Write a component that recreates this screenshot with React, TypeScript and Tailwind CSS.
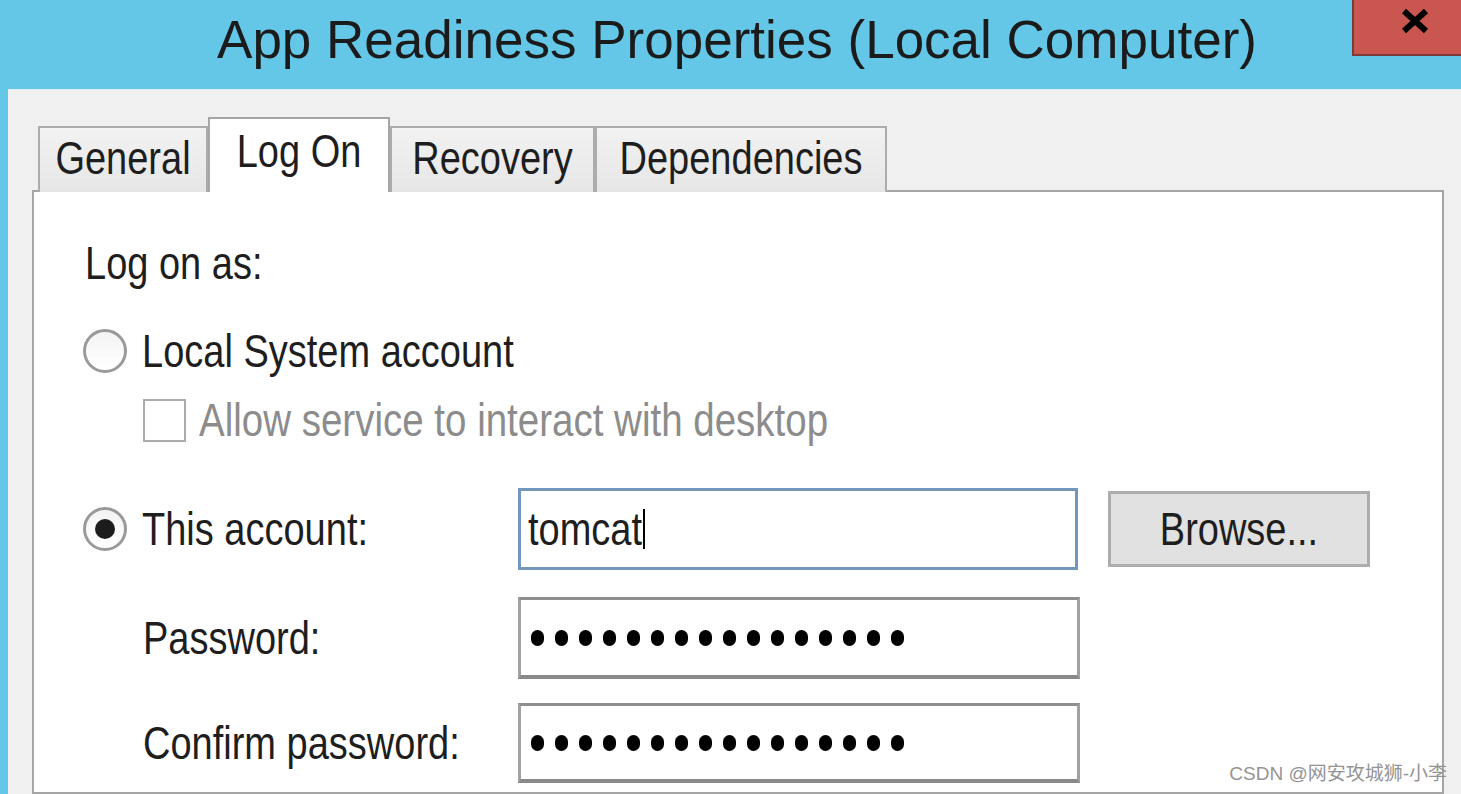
import React from "react"

function Txt({ children, className = "" }: { children: React.ReactNode; className?: string }) {
    return <span className={"inline-block scale-y-[1.2] leading-none " + className}>{children}</span>
}

function Radio({ checked }: { checked?: boolean }) {
    return (
        <div className="w-[44px] h-[44px] rounded-full border-[3px] border-[#9a9a9a] bg-gradient-to-b from-[#f4f4f4] to-white flex items-center justify-center shrink-0">
            {checked && <div className="w-[20px] h-[20px] rounded-full bg-[#1c1c1c]" />}
        </div>
    )
}

function Dots() {
    return (
        <div className="flex gap-[11px] pl-[10px]">
            {Array.from({ length: 16 }).map((_, i) => (
                <div key={i} className="w-[13px] h-[16px] rounded-full bg-black" />
            ))}
        </div>
    )
}

function Tab({ label, active, width }: { label: string; active?: boolean; width: string }) {
    if (active) {
        return (
            <div className={"h-[75px] bg-white border-2 border-b-0 border-[#a5a5a5] flex justify-center pt-[15px] relative z-10 " + width}>
                <Txt className="text-[38px] text-[#1e1e1e]">{label}</Txt>
            </div>
        )
    }
    return (
        <div className={"h-[66px] bg-gradient-to-b from-[#f2f2f2] to-[#e6e6e6] border-2 border-b-0 border-[#acacac] flex justify-center pt-[13px] " + width}>
            <Txt className="text-[38px] text-[#1e1e1e]">{label}</Txt>
        </div>
    )
}

export default function App() {
    return (
        <div className="w-[1461px] h-[794px] overflow-hidden bg-[#64c7e8] flex flex-col font-['Liberation_Sans','Noto_Sans_CJK_SC',sans-serif] relative">
            {/* title bar */}
            <div className="h-[89px] flex items-start shrink-0">
                <div className="flex-1 flex justify-center pl-[122px] pt-[13px]">
                    <span className="text-[53px] leading-none text-[#1b1b1b]">App Readiness Properties (Local Computer)</span>
                </div>
                <div className="w-[109px] h-[56px] bg-[#c9574f] border-l-2 border-b-2 border-[#7c3b36] flex items-start pl-[46px] pt-[8px]">
                    <svg width="30" height="26" viewBox="0 0 30 26">
                        <path d="M4 3 L26 23 M26 3 L4 23" stroke="#000" strokeWidth="6" strokeLinecap="butt" />
                    </svg>
                </div>
            </div>

            {/* body */}
            <div className="flex-1 ml-[8px] bg-[#f0f0f0] border-t border-[#dff1f8] pl-[24px] pr-[17px] pt-[27px] flex flex-col">
                <div className="flex items-end ml-[6px] h-[75px] -mb-[2px] relative z-10">
                    <Tab label="General" width="w-[170px]" />
                    <Tab label="Log On" active width="w-[182px]" />
                    <Tab label="Recovery" width="w-[205px]" />
                    <Tab label="Dependencies" width="w-[292px]" />
                </div>

                <div className="flex-1 bg-white border-2 border-[#a5a5a5] pl-[49px] pt-[48px] flex flex-col text-[38px] text-[#1e1e1e]">
                    <div className="h-[46px] flex items-center pl-[2px]">
                        <Txt>Log on as:</Txt>
                    </div>

                    <div className="h-[46px] mt-[42px] flex items-center gap-[15px]">
                        <Radio />
                        <Txt>Local System account</Txt>
                    </div>

                    <div className="h-[46px] mt-[23px] flex items-center gap-[13px] pl-[60px]">
                        <div className="w-[43px] h-[43px] border-2 border-[#ababab] bg-white shrink-0" />
                        <Txt className="text-[#8c8c8c] text-[38.5px]">Allow service to interact with desktop</Txt>
                    </div>

                    <div className="h-[82px] mt-[45px] flex items-center">
                        <div className="flex items-center gap-[15px] w-[435px]">
                            <Radio checked />
                            <Txt>This account:</Txt>
                        </div>
                        <div className="w-[560px] h-[82px] border-[3px] border-[#7396bd] bg-white flex items-center pl-[7px]">
                            <Txt>tomcat</Txt>
                            <div className="w-[2px] h-[40px] bg-black ml-[1px]" />
                        </div>
                        <div className="ml-[30px] w-[262px] h-[76px] bg-[#e1e1e1] border-[3px] border-[#adadad] flex items-center justify-center">
                            <Txt>Browse...</Txt>
                        </div>
                    </div>

                    <div className="h-[82px] mt-[27px] flex items-center">
                        <div className="w-[435px] pl-[60px]">
                            <Txt>Password:</Txt>
                        </div>
                        <div className="w-[562px] h-[82px] border-[3px] border-[#a2a2a2] border-t-[#8e8e8e] border-b-[4px] border-b-[#8a8a8a] bg-white flex items-center">
                            <Dots />
                        </div>
                    </div>

                    <div className="h-[80px] mt-[24px] flex items-center">
                        <div className="w-[435px] pl-[60px]">
                            <Txt>Confirm password:</Txt>
                        </div>
                        <div className="w-[562px] h-[80px] border-[3px] border-[#a2a2a2] border-t-[#8e8e8e] border-b-[4px] border-b-[#8a8a8a] bg-white flex items-center">
                            <Dots />
                        </div>
                    </div>
                </div>
            </div>

            <div className="absolute right-[14px] bottom-[11px] text-[19px] text-[#949494] leading-none">CSDN @网安攻城狮-小李</div>
        </div>
    )
}
